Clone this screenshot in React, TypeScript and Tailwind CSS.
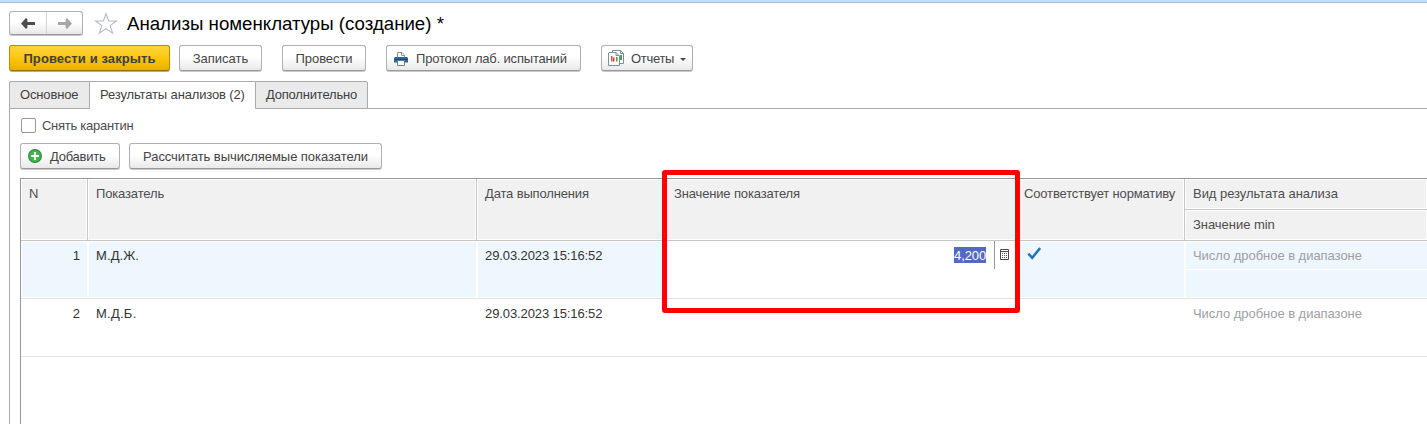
import type { ReactNode } from "react";

const buttonBase =
  "flex h-[26px] shrink-0 items-center rounded-[3px] border pt-[2px] whitespace-pre";
const plainButton =
  "border-[#b0b0b0] border-b-[#989898] bg-linear-to-b from-white from-45% to-[#e9e9e9] text-[#444444] shadow-[0_1px_0_#c9c9c9]";

function Button({ className, children }: { className: string; children: ReactNode }) {
  return <button className={`${buttonBase} ${plainButton} ${className}`}>{children}</button>;
}

function Arrow({ className, flip }: { className: string; flip?: boolean }) {
  return (
    <svg width="14" height="11" viewBox="0 0 14 11" className={className}>
      <path
        d="M0 5.5 5 0 6.4 1.2V4H14V7H6.4V9.8L5 11Z"
        fill="currentColor"
        transform={flip ? "matrix(-1 0 0 1 14 0)" : undefined}
      />
    </svg>
  );
}

function Star() {
  return (
    <svg width="24" height="23" viewBox="0 0 24 23" className="ml-[11px] shrink-0">
      <path
        d="M12 1.5 14.6 9H22.4L16.2 13.6 18.6 21.2 12 16.6 5.4 21.2 7.8 13.6 1.6 9H9.4Z"
        fill="white"
        stroke="#b3bbc3"
        strokeWidth="1.1"
      />
    </svg>
  );
}

function Printer() {
  return (
    <svg width="14" height="14" viewBox="0 0 14 14" className="-mt-px shrink-0">
      <path d="M3.5 6V.5H8L10.5 3V6" fill="white" stroke="#7e98ad" />
      <path d="M7.5.5V3.5H10.5" fill="none" stroke="#7e98ad" />
      <path d="M1 5H13L14 6V10.5H0V6Z" fill="#336392" />
      <path d="M1 7.5H13" stroke="#1c4672" />
      <path d="M3.5 8.5H10.5V13.5H3.5Z" fill="white" stroke="#5e81a2" />
    </svg>
  );
}

function Reports() {
  return (
    <svg width="16" height="16" viewBox="0 0 16 16" className="-mt-[2px] shrink-0">
      <path d="M4.5 3V.5H12.5L15.5 3.5V13.5H11" fill="white" stroke="#7890a4" />
      <path d="M12.5.5V3.5H15.5" fill="none" stroke="#7890a4" />
      <path d="M12 5H14V10H12Z" fill="#4ca64c" />
      <path d="M1 2.5H8L11.5 6V15.5H.5V3Z" fill="white" stroke="#7890a4" />
      <path d="M8 2.5V5.5H11" fill="none" stroke="#7890a4" />
      <path d="M3 6H4.500V11.500H3Z" fill="#f04a3c" />
      <path d="M5 7.500H6.500V11.500H5Z" fill="#e23b2d" />
      <path d="M8 7H9.500V11.500H8Z" fill="#43a047" />
    </svg>
  );
}

function Plus() {
  return (
    <svg width="14" height="14" viewBox="0 0 14 14" className="-mt-[2px] shrink-0">
      <circle cx="7" cy="7" r="6.4" fill="#43b649" stroke="#2a9240" strokeWidth="1.2" />
      <path d="M7 3V11M3 7H11" stroke="white" strokeWidth="2" />
    </svg>
  );
}

function Calculator() {
  return (
    <svg width="9" height="11" viewBox="0 0 9 11" className="mt-[8px] ml-[5px]">
      <path d="M.5.5H8.5V10.500H.5Z" fill="white" stroke="#4a4a4a" />
      <path d="M1 2.500H8" stroke="#4a4a4a" />
      <path d="M2 4.500H7M2 6.500H7M2 8.500H7" stroke="#555" strokeDasharray="1 1" />
    </svg>
  );
}

function Check() {
  return (
    <svg width="14" height="13" viewBox="0 0 14 13" className="mt-[4px] ml-[11px]">
      <path d="M1.400 6.600 5.200 10.800 13.200 1" fill="none" stroke="#2372bd" strokeWidth="2.500" />
    </svg>
  );
}

function HeaderCell({ className, children }: { className?: string; children: ReactNode }) {
  return (
    <div className={`border-r border-[#c6c6c6] p-px ${className ?? ""}`}>
      <div className="h-full bg-[#f1f1f1] pt-[5px] pl-[7px] whitespace-nowrap text-[#4d4d4d]">
        {children}
      </div>
    </div>
  );
}

function Cell({ active, className, children }: { active?: boolean; className?: string; children?: ReactNode }) {
  return (
    <div className="min-w-0 py-px pl-px">
      <div
        className={`h-full pt-[5px] pl-[7px] whitespace-nowrap ${active ? "mr-px bg-[#eef6fe]" : ""} ${className ?? ""}`}
      >
        {children}
      </div>
    </div>
  );
}

const columns = "grid grid-cols-[67px_389px_189px_350px_169px_1fr]";

export default function App() {
  return (
    <div className="relative flex h-[424px] w-[1427px] flex-col overflow-hidden bg-white font-['Liberation_Sans',Arial,sans-serif] text-[13px] leading-[18px] text-[#333333]">
      <div className="h-[3px] shrink-0 border-b border-[#a3bdd3] bg-[#c0e0fc]" />

      <header className="mt-[8px] ml-[9px] flex h-[25px] shrink-0 items-center">
        <div className="flex h-[24px] w-[74px] self-start rounded-[3px] border border-[#b0b0b0] border-b-[#989898] bg-linear-to-b from-white from-45% to-[#e9e9e9] shadow-[0_1px_0_#c9c9c9]">
          <button className="flex w-[37px] items-center justify-center border-r border-[#d4d4d4] pt-px">
            <Arrow className="text-[#4c4c4c]" />
          </button>
          <button className="flex w-[35px] items-center justify-center pt-px">
            <Arrow className="text-[#a6a6a6]" flip />
          </button>
        </div>
        <Star />
        <h1 className="ml-[9px] text-[18.67px] leading-[24px] whitespace-nowrap text-black">
          Анализы номенклатуры (создание) *
        </h1>
      </header>

      <div className="mt-[9px] ml-[9px] flex h-[27px] shrink-0">
        <button
          className={`${buttonBase} w-[161px] justify-center border-[#b58b00] border-b-[#967300] bg-linear-to-b from-[#ffd43c] via-[#fcc608] to-[#e9b100] font-bold tracking-[0.1px] text-[#3f3f3f] shadow-[0_1px_0_#c3ad68]`}
        >
          Провести и закрыть
        </button>
        <Button className="ml-[9px] w-[83px] justify-center">Записать</Button>
        <Button className="ml-[20px] w-[84px] justify-center tracking-[-0.08px]">Провести</Button>
        <Button className="ml-[20px] w-[195px] pl-[7px]">
          <Printer />
          <span className="ml-[8px] tracking-[-0.18px]">Протокол лаб. испытаний</span>
        </Button>
        <Button className="ml-[20px] w-[92px] pl-[6px]">
          <Reports />
          <span className="ml-[7px] w-[43px] tracking-[-0.3px]">Отчеты</span>
          <span className="ml-[6px] border-x-[3px] border-t-[3px] border-x-transparent border-t-[#444444]" />
        </Button>
      </div>

      <nav className="mt-[9px] ml-[9px] flex h-[28px] shrink-0 leading-[26px] tracking-[-0.14px] whitespace-nowrap text-[#3f3f3f]">
        <div className="w-[81px] rounded-tl-[2px] border border-[#ababab] bg-[#eaeaea] pl-[10px]">Основное</div>
        <div className="w-[165px] border-t border-[#ababab] pl-[10px]">Результаты анализов (2)</div>
        <div className="w-[113px] rounded-tr-[2px] border border-[#ababab] bg-[#eaeaea] pl-[10px] tracking-[-0.2px]">
          Дополнительно
        </div>
        <div className="flex-1 border-b border-[#ababab]" />
      </nav>

      <main className="ml-[9px] flex flex-1 flex-col border-l border-[#ababab] pl-[10px]">
        <label className="mt-[8px] ml-px flex h-[18px] items-center text-[#4d4d4d]">
          <span className="-mt-px size-[15px] rounded-[2px] border border-[#999999] bg-white" />
          <span className="ml-[6px] tracking-[-0.27px]">Снять карантин</span>
        </label>
        <div className="mt-[8px] flex h-[27px]">
          <Button className="w-[100px] pl-[7px]">
            <Plus />
            <span className="ml-[8px] tracking-[-0.25px]">Добавить</span>
          </Button>
          <Button className="ml-[9px] w-[253px] justify-center tracking-[-0.06px]">
            Рассчитать вычисляемые показатели
          </Button>
        </div>

        <div className="mt-[8px] flex-1 border-t border-l border-[#969696]">
          <div className={`${columns} h-[62px] border-b border-[#c6c6c6] tracking-[-0.15px]`}>
            <HeaderCell>N</HeaderCell>
            <HeaderCell>Показатель</HeaderCell>
            <HeaderCell>Дата выполнения</HeaderCell>
            <HeaderCell>Значение показателя</HeaderCell>
            <HeaderCell>Соответствует нормативу</HeaderCell>
            <div className="grid grid-rows-[31px_30px] tracking-[-0.04px]">
              <HeaderCell className="border-r-0 border-b">Вид результата анализа</HeaderCell>
              <HeaderCell className="border-r-0">Значение min</HeaderCell>
            </div>
          </div>

          <div className={`${columns} h-[58px] border-b border-[#e2e2e2]`}>
            <Cell active className="pr-[7px] text-right">1</Cell>
            <Cell active className="tracking-[0.1px]">М.Д.Ж.</Cell>
            <Cell active className="tracking-[-0.1px]">29.03.2023 15:16:52</Cell>
            <div className="flex justify-end">
              <span className="mt-[6px] h-[16px] w-[32px] bg-[#5269c5] leading-[17px] tracking-[-0.1px] text-white">
                4,200
              </span>
              <div className="ml-[8px] h-[28px] w-[22px] border-l border-[#969696]">
                <Calculator />
              </div>
            </div>
            <div className="py-px pr-px">
              <div className="h-full bg-[#eef6fe] pt-px">
                <Check />
              </div>
            </div>
            <div className="grid grid-rows-[27px_27px] gap-px py-px pl-px">
              <div className="bg-[#eef6fe] pt-[5px] pl-[7px] tracking-[-0.04px] text-[#a0a0a4]">
                Число дробное в диапазоне
              </div>
              <div className="bg-[#eef6fe]" />
            </div>
          </div>

          <div className={`${columns} h-[58px] border-b border-[#e2e2e2]`}>
            <Cell className="pr-[8px] text-right">2</Cell>
            <Cell className="tracking-[0.25px]">М.Д.Б.</Cell>
            <Cell className="tracking-[-0.1px]">29.03.2023 15:16:52</Cell>
            <Cell />
            <Cell />
            <Cell className="tracking-[-0.04px] text-[#a0a0a4]">Число дробное в диапазоне</Cell>
          </div>
        </div>
      </main>

      <div className="pointer-events-none absolute top-[170px] left-[662px] h-[143px] w-[358px] rounded-[3px] border-[5px] border-[#ff0000]" />
    </div>
  );
}
